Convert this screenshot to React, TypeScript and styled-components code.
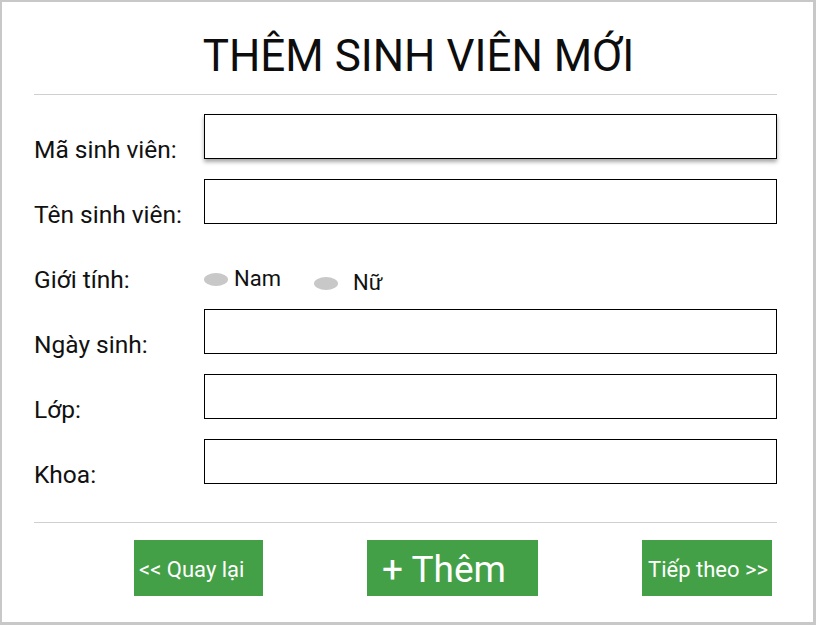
import React from "react";
import styled, { createGlobalStyle } from "styled-components";

const GlobalStyle = createGlobalStyle`
  html, body {
    margin: 0;
    padding: 0;
    background: #ffffff;
  }
  body {
    font-family: Roboto, "Noto Sans", "Liberation Sans", sans-serif;
    color: #111111;
  }
`;

const Frame = styled.div`
  width: 816px;
  height: 625px;
  box-sizing: border-box;
  border: 2px solid #c8c8c8;
  border-right-width: 3px;
  border-bottom-width: 3px;
  background: #ffffff;
  padding: 0 36px 0 32px;
`;

const Title = styled.h1`
  margin: 0;
  padding-top: 28px;
  padding-left: 26px;
  font-size: 44px;
  font-weight: 400;
  line-height: 52px;
  text-align: center;
  color: #0d0d0d;
`;

const Divider = styled.div<{ $top: number }>`
  height: 1px;
  background: #cfcfcf;
  margin-top: ${(p) => p.$top}px;
`;

const FormGrid = styled.div`
  display: grid;
  grid-template-columns: 170px 1fr;
  grid-auto-rows: 45px;
  row-gap: 20px;
  margin-top: 19px;
`;

const Label = styled.label`
  align-self: end;
  font-size: 24.5px;
  line-height: 24.5px;
  margin-bottom: -3px;
  color: #111111;
  white-space: nowrap;
`;

const TextInput = styled.input<{ $focused?: boolean }>`
  box-sizing: border-box;
  width: 100%;
  height: 45px;
  margin: 0;
  border: 1.5px solid #000000;
  background: #ffffff;
  outline: none;
  font-family: inherit;
  font-size: 18px;
  box-shadow: ${(p) => (p.$focused ? "0 3px 4px rgba(0, 0, 0, 0.35)" : "none")};
`;

const RadioGroup = styled.div`
  display: flex;
  align-items: flex-start;
`;

const RadioOption = styled.div<{ $top: number; $gap: number; $left: number }>`
  display: flex;
  align-items: center;
  gap: ${(p) => p.$gap}px;
  margin-top: ${(p) => p.$top}px;
  margin-left: ${(p) => p.$left}px;
`;

const Dot = styled.span`
  display: block;
  width: 24px;
  height: 13px;
  border-radius: 50%;
  background: #c8c8c8;
  margin-top: 2px;
`;

const RadioText = styled.span`
  font-size: 22px;
  line-height: 22px;
  color: #111111;
`;

const ButtonRow = styled.div`
  display: flex;
  justify-content: space-between;
  margin-top: 17px;
  padding: 0 5px 0 100px;
`;

const GreenButton = styled.button<{ $width: number; $pad: number; $size: number }>`
  box-sizing: border-box;
  width: ${(p) => p.$width}px;
  height: 56px;
  display: flex;
  align-items: center;
  justify-content: flex-start;
  padding: 3px 0 0 ${(p) => p.$pad}px;
  margin: 0;
  border: none;
  background: #43a047;
  color: #ffffff;
  font-family: Roboto, "Noto Sans", sans-serif;
  font-size: ${(p) => p.$size}px;
  font-weight: 400;
  white-space: nowrap;
  cursor: pointer;
`;

const fields: { label: string; focused?: boolean }[] = [
  { label: "Mã sinh viên:", focused: true },
  { label: "Tên sinh viên:" },
];

const fieldsAfter: { label: string }[] = [
  { label: "Ngày sinh:" },
  { label: "Lớp:" },
  { label: "Khoa:" },
];

export default function App() {
  return (
    <>
      <GlobalStyle />
      <Frame>
        <Title>THÊM SINH VIÊN MỚI</Title>
        <Divider $top={12} />
        <FormGrid>
          {fields.map((f) => (
            <React.Fragment key={f.label}>
              <Label>{f.label}</Label>
              <TextInput type="text" $focused={f.focused} />
            </React.Fragment>
          ))}
          <Label>Giới tính:</Label>
          <RadioGroup>
            <RadioOption $top={23.5} $gap={6} $left={0}>
              <Dot />
              <RadioText>Nam</RadioText>
            </RadioOption>
            <RadioOption $top={27.5} $gap={15} $left={33}>
              <Dot />
              <RadioText>Nữ</RadioText>
            </RadioOption>
          </RadioGroup>
          {fieldsAfter.map((f) => (
            <React.Fragment key={f.label}>
              <Label>{f.label}</Label>
              <TextInput type="text" />
            </React.Fragment>
          ))}
        </FormGrid>
        <Divider $top={38} />
        <ButtonRow>
          <GreenButton $width={129} $pad={5} $size={22}>
            &lt;&lt; Quay lại
          </GreenButton>
          <GreenButton $width={171} $pad={15} $size={37}>
            + Thêm
          </GreenButton>
          <GreenButton $width={130} $pad={6} $size={22}>
            Tiếp theo &gt;&gt;
          </GreenButton>
        </ButtonRow>
      </Frame>
    </>
  );
}
